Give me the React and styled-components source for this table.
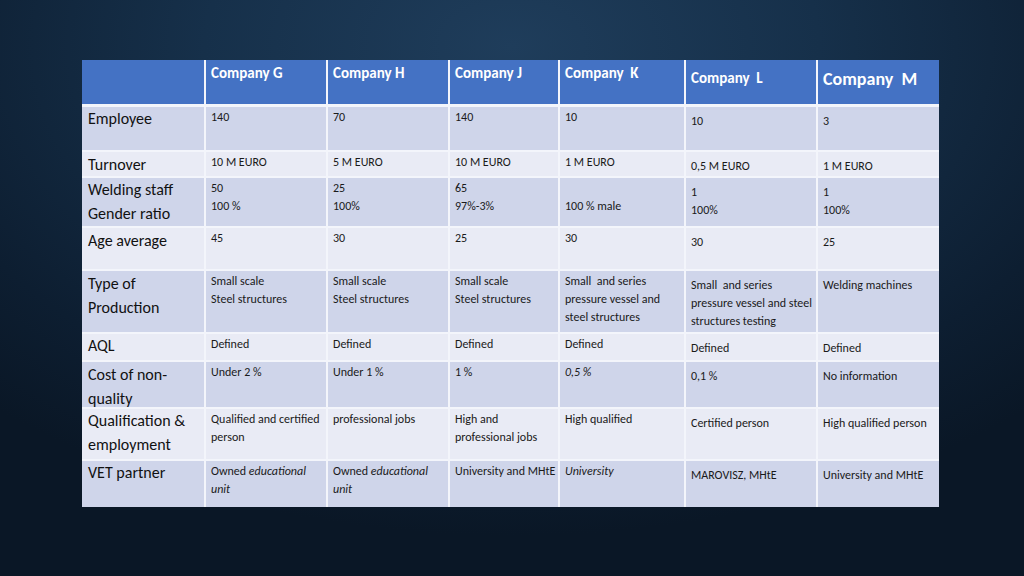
import React from "react";
import styled, { createGlobalStyle } from "styled-components";

const Global = createGlobalStyle`
  html, body { margin: 0; padding: 0; }
  body { width: 1024px; height: 576px; overflow: hidden; }
  #root { width: 1024px; height: 576px; }
`;

const FONT = `Carlito, Calibri, Lato, "Liberation Sans", sans-serif`;

const Page = styled.div`
  box-sizing: border-box;
  width: 1024px;
  height: 576px;
  padding: 60px 85px 69px 82px;
  display: flex;
  background: radial-gradient(ellipse 75% 85% at 50% 8%, #1f3d5b 0%, #16304a 40%, #0d1e31 80%, #0a1726 100%);
  font-family: ${FONT};
`;

const Table = styled.div`
  flex: 1;
  display: grid;
  grid-template-columns: 122px 120px 120px 108px 124px 130px 121px;
  grid-template-rows: 45px 43px 24px 48px 41px 61px 26px 45px 50px 46px;
  gap: 2px;
  background: #f3f5fb;
`;

const HeadCell = styled.div`
  background: #4472c4;
  color: #ffffff;
  font-weight: 700;
  font-size: ${(p) => p.$size}px;
  line-height: 22px;
  padding: ${(p) => p.$pt}px 6px 0 5px;
  white-space: pre;
  border-bottom: 1px solid #f3f5fb;
`;

const LabelCell = styled.div`
  background: ${(p) => (p.$band ? "#cfd5ea" : "#e9ebf5")};
  color: #111;
  font-size: 16px;
  line-height: 24px;
  padding: 0 4px 0 6px;
  white-space: nowrap;
`;

const ValueCell = styled.div`
  background: ${(p) => (p.$band ? "#cfd5ea" : "#e9ebf5")};
  color: #1a1a1a;
  font-size: 12px;
  line-height: 18px;
  padding: ${(p) => p.$pt}px 3px 0 5px;
  white-space: pre;
`;

const Line = styled.div`
  min-height: 18px;
`;

const heads = [
  { t: "", size: 15, pt: 2 },
  { t: "Company G", size: 15, pt: 2 },
  { t: "Company H", size: 15, pt: 2 },
  { t: "Company J", size: 15, pt: 2 },
  { t: "Company  K", size: 15, pt: 2 },
  { t: "Company  L", size: 15, pt: 7 },
  { t: "Company  M", size: 18, pt: 8 },
];

const I = ({ children }) => <i>{children}</i>;

const rows = [
  { label: ["Employee"], lp: 0, vals: [["140"], ["70"], ["140"], ["10"], ["10"], ["3"]] },
  { label: ["Turnover"], lp: 1, vals: [["10 M EURO"], ["5 M EURO"], ["10 M EURO"], ["1 M EURO"], ["0,5 M EURO"], ["1 M EURO"]] },
  {
    label: ["Welding staff", "Gender ratio"],
    lp: 0,
    vals: [["50", "100 %"], ["25", "100%"], ["65", "97%-3%"], ["", "100 % male"], ["1", "100%"], ["1", "100%"]],
  },
  { label: ["Age average"], lp: 1, vals: [["45"], ["30"], ["25"], ["30"], ["30"], ["25"]] },
  {
    label: ["Type of", "Production"],
    lp: 1,
    vals: [
      ["Small scale", "Steel structures"],
      ["Small scale", "Steel structures"],
      ["Small scale", "Steel structures"],
      ["Small  and series", "pressure vessel and", "steel structures"],
      ["Small  and series", "pressure vessel and steel", "structures testing"],
      ["Welding machines"],
    ],
  },
  { label: ["AQL"], lp: 0, vals: [["Defined"], ["Defined"], ["Defined"], ["Defined"], ["Defined"], ["Defined"]] },
  {
    label: ["Cost of non-", "quality"],
    lp: 1,
    vals: [["Under 2 %"], ["Under 1 %"], ["1 %"], [<I key="i">0,5 %</I>], ["0,1 %"], ["No information"]],
  },
  {
    label: ["Qualification &", "employment"],
    lp: 0,
    vals: [
      ["Qualified and certified", "person"],
      ["professional jobs"],
      ["High and", "professional jobs"],
      ["High qualified"],
      ["Certified person"],
      ["High qualified person"],
    ],
  },
  {
    label: ["VET partner"],
    lp: 0,
    vals: [
      [<span key="a">Owned <I>educational</I></span>, <I key="b">unit</I>],
      [<span key="a">Owned <I>educational</I></span>, <I key="b">unit</I>],
      ["University and MHtE"],
      [<I key="i">University</I>],
      ["MAROVISZ, MHtE"],
      ["University and MHtE"],
    ],
  },
];

const colPad = [1, 1, 1, 1, 5, 5];

export default function App() {
  return (
    <>
      <Global />
      <Page>
        <Table>
          {heads.map((h, i) => (
            <HeadCell key={"h" + i} $size={h.size} $pt={h.pt}>
              {h.t}
            </HeadCell>
          ))}
          {rows.map((r, ri) => {
            const band = ri % 2 === 0;
            return (
              <React.Fragment key={"r" + ri}>
                <LabelCell $band={band} style={{ paddingTop: r.lp }}>
                  {r.label.map((l, li) => (
                    <div key={li}>{l}</div>
                  ))}
                </LabelCell>
                {r.vals.map((v, vi) => (
                  <ValueCell key={vi} $band={band} $pt={colPad[vi]}>
                    {v.map((line, li) => (
                      <Line key={li}>{line}</Line>
                    ))}
                  </ValueCell>
                ))}
              </React.Fragment>
            );
          })}
        </Table>
      </Page>
    </>
  );
}
